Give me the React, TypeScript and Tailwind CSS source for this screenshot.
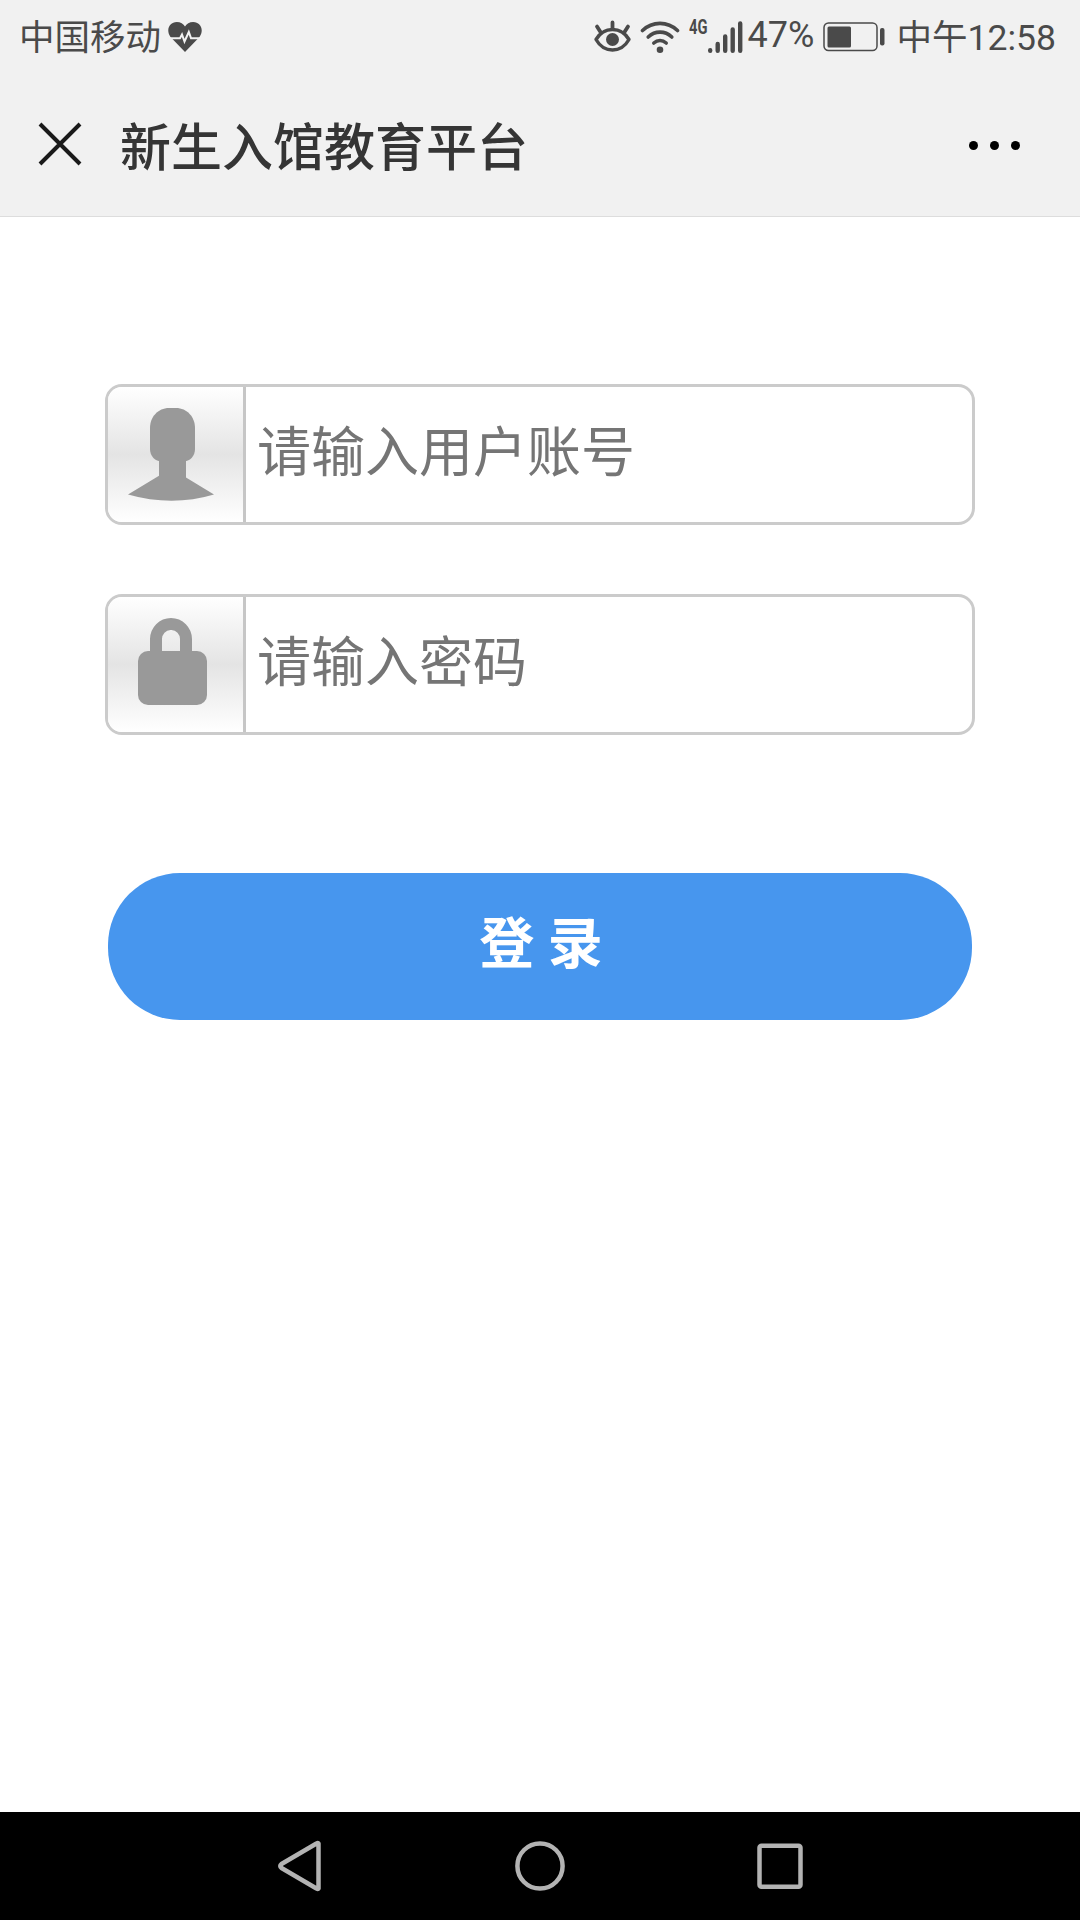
import React from 'react';

const StatusBar: React.FC = () => (
  <div className="h-[72px] flex items-center justify-between pl-[19px] pr-[24px] pt-[2px] text-[#4a4a4a] text-[36px] leading-none">
    <div className="flex items-center">
      <span className="text-[35.5px] pt-[4px]">中国移动</span>
      <svg className="w-[36px] h-[32px] ml-[6px]" viewBox="0 0 36 32" fill="none">
        <path d="M18 31 L3.5 16 C-1.5 9 2.5 1 9.8 1 C13.5 1 16.5 2.8 18 5.5 C19.5 2.8 22.5 1 26.2 1 C33.5 1 37.5 9 32.5 16 Z" fill="#4a4a4a" />
        <path d="M2 17.2 H13 L15 13.5 L17.5 20.5 L21.8 11 L24 17.2 H34" stroke="#f1f1f1" strokeWidth="2" />
      </svg>
    </div>

    <div className="flex items-center">
      {/* Eye comfort */}
      <svg className="w-[37px] h-[34px]" viewBox="0 0 37 34" fill="none" stroke="#4a4a4a" strokeLinecap="round">
        <path d="M2 19.5 C10 6.200 27 6.200 35 19.5 C27 33.500 10 33.500 2 19.5 Z" strokeWidth="3.4" strokeLinejoin="round" />
        <path d="M18.5 2.500 V9 M3 6.500 L6.5 12 M34 6.500 L30.5 12" strokeWidth="3.8" />
        <circle cx="18.5" cy="19.5" r="6.5" fill="#4a4a4a" stroke="none" />
      </svg>
      {/* Wifi */}
      <svg className="w-[40px] h-[34px] ml-[9px]" viewBox="0 0 40 34" fill="none" stroke="#4a4a4a" strokeWidth="3.6" strokeLinecap="round">
        <path d="M2.5 10.5 C12.5 1 27.5 1 37.5 10.5" />
        <path d="M8.2 17 C15 10.5 25 10.5 31.8 17" />
        <path d="M13.8 23 C17.5 19.8 22.5 19.8 26.2 23" />
        <circle cx="20" cy="29.7" r="3.3" fill="#4a4a4a" stroke="none" />
      </svg>
      {/* Signal */}
      <span className="w-[20px] h-[34px] ml-[9px] flex items-start">
        <span className="font-['Roboto'] font-bold text-[21px] leading-[15px] origin-left scale-x-[0.7]">4G</span>
      </span>
      <svg className="w-[36px] h-[34px] -ml-[2px]" viewBox="0 0 36 34" fill="none" stroke="#4a4a4a" strokeWidth="4.4" strokeLinecap="round">
        <path d="M3.2 30.2 V30.8 M10.7 24 V30.8 M18.2 16.5 V30.8 M25.7 9.5 V30.8 M33.2 3.5 V30.8" />
      </svg>
      <span className="w-[67px] ml-[5px] pb-[4px]">47%</span>
      {/* Battery */}
      <svg className="w-[62px] h-[30px] ml-[8px]" viewBox="0 0 62 30" fill="none">
        <rect x="1" y="1" width="53" height="27.5" rx="4.5" stroke="#4a4a4a" strokeWidth="1.5" />
        <rect x="4.5" y="4.5" width="23.5" height="21" rx="1.5" fill="#4a4a4a" />
        <rect x="57" y="6" width="4.5" height="17.5" rx="2" fill="#4a4a4a" />
      </svg>
      <span className="ml-[12px] pt-[3px] text-[35.5px]">中午12:58</span>
    </div>
  </div>
);

const TitleBar: React.FC = () => (
  <header className="h-[145px] flex items-center pl-[38px] pr-[60px] pb-[1px] border-b border-[#dddddd]">
    <svg className="w-[44px] h-[44px]" viewBox="0 0 44 44" stroke="#1a1a1a" strokeWidth="4">
      <path d="M2 2 L42 42 M42 2 L2 42" />
    </svg>
    <h1 className="ml-[38px] pt-[10px] text-[51px] leading-[60px] font-medium text-[#353535]">新生入馆教育平台</h1>
    <div className="ml-auto pt-[3px] flex gap-[12px]">
      <span className="w-[9px] h-[9px] rounded-full bg-black" />
      <span className="w-[9px] h-[9px] rounded-full bg-black" />
      <span className="w-[9px] h-[9px] rounded-full bg-black" />
    </div>
  </header>
);

interface FieldProps {
  type: string;
  placeholder: string;
  icon: React.ReactNode;
}

const Field: React.FC<FieldProps> = ({ type, placeholder, icon }) => (
  <label className="flex h-[141px] border-[3px] border-[#cbcbcb] rounded-[17px] overflow-hidden">
    <span className="w-[138px] shrink-0 border-r-[3px] border-[#c6c6c6] bg-linear-to-b from-white via-[#e4e4e4] to-white">
      {icon}
    </span>
    <input
      type={type}
      placeholder={placeholder}
      className="flex-1 min-w-0 pl-[11px] pb-[3px] text-[54px] placeholder:text-[#757575] outline-none"
    />
  </label>
);

const UserIcon = () => (
  <svg className="w-[135px] h-[135px]" viewBox="0 0 135 135" fill="#999999">
    <path d="M61 21 H68 C79 21 87 30 87 41 V62 C87 69 82 74.5 75 74.5 H54 C47 74.5 42 69 42 62 V41 C42 30 50 21 61 21 Z" />
    <path d="M51 74 H78 V90.5 L106 107.5 Q64 120 20 107.5 L51 88.8 Z" />
  </svg>
);

const LockIcon = () => (
  <svg className="w-[135px] h-[135px]" viewBox="0 0 135 135" fill="#999999">
    <rect x="30" y="54" width="69" height="54" rx="10" />
    <path d="M42 56 V42 A21 21 0 0 1 84 42 V56 H72 V42 A8.5 9 0 0 0 63.5 33 H62.5 A8.5 9 0 0 0 54 42 V56 Z" />
  </svg>
);

const NavBar: React.FC = () => (
  <nav className="h-[108px] bg-black flex justify-between items-center px-[275px]">
    <svg className="w-[50px] h-[54px]" viewBox="0 0 50 54" fill="none" stroke="#b3b3b3" strokeWidth="4.5" strokeLinejoin="round">
      <path d="M43.5 4.5 V49.5 Q43 50.5 41.5 49.5 L6.5 29 Q4 27 6.5 25 L41.5 4.5 Q43 3.5 43.5 4.5 Z" />
    </svg>
    <svg className="w-[54px] h-[54px]" viewBox="0 0 54 54" fill="none" stroke="#b3b3b3" strokeWidth="4.5">
      <circle cx="27" cy="27" r="22.6" />
    </svg>
    <svg className="w-[50px] h-[54px]" viewBox="0 0 50 54" fill="none" stroke="#b3b3b3" strokeWidth="4.5">
      <rect x="4.5" y="6.8" width="41" height="41" rx="2" />
    </svg>
  </nav>
);

export default function App() {
  return (
    <div className="w-[1080px] h-[1920px] flex flex-col bg-white font-['Roboto','Noto_Sans_CJK_SC',sans-serif]">
      <div className="bg-[#f1f1f1]">
        <StatusBar />
        <TitleBar />
      </div>

      <main className="flex-1 pt-[167px] px-[105px]">
        <form className="flex flex-col" onSubmit={(e) => e.preventDefault()}>
          <div className="flex flex-col gap-[69px]">
            <Field type="text" placeholder="请输入用户账号" icon={<UserIcon />} />
            <Field type="password" placeholder="请输入密码" icon={<LockIcon />} />
          </div>
          <button
            type="submit"
            className="mt-[138px] mx-[3px] h-[147px] pl-[2px] pb-[4px] rounded-[72px] bg-[#4796ee] text-white text-[55px] font-bold"
          >
            登 录
          </button>
        </form>
      </main>

      <NavBar />
    </div>
  );
}
